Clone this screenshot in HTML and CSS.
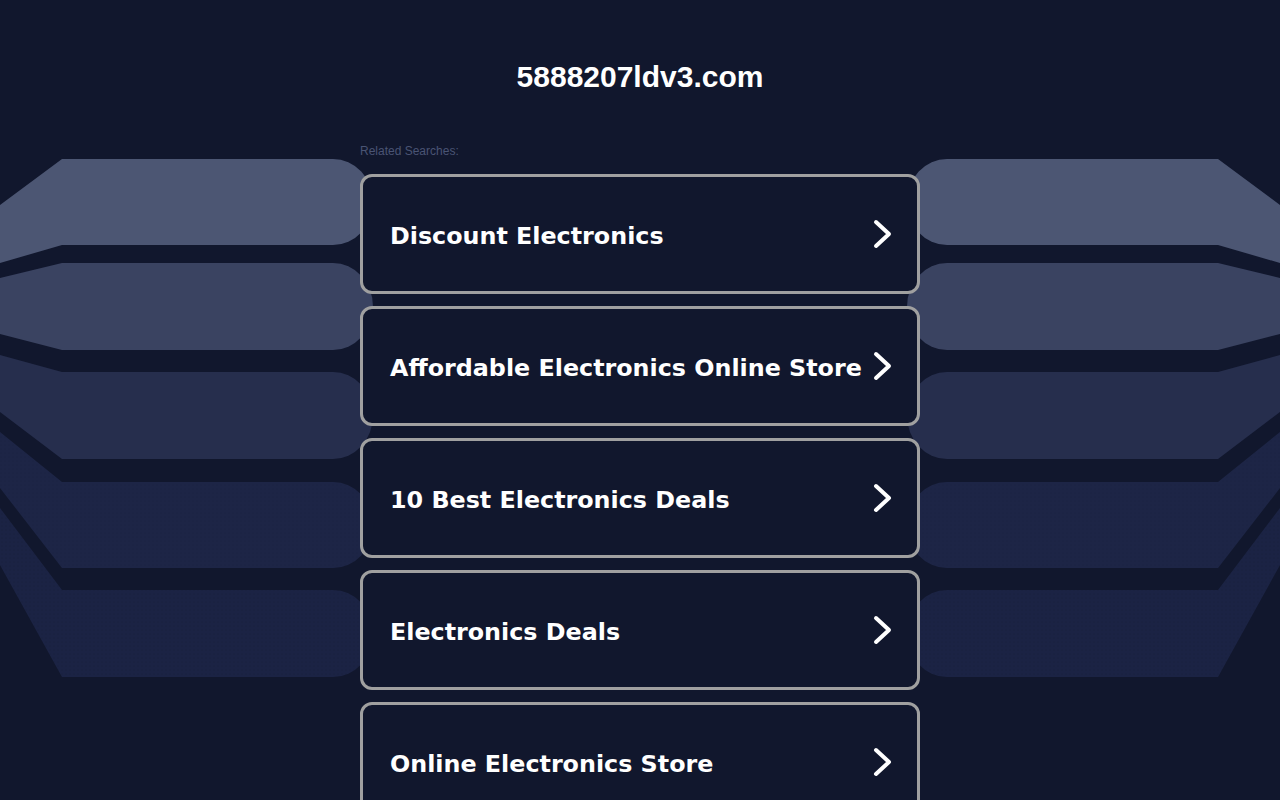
FILE: index.html
```html
<!DOCTYPE html>
<html lang="en">
<head>
<meta charset="utf-8">
<title>5888207ldv3.com</title>
<link rel="stylesheet" href="styles.css">
</head>
<body>
<svg class="backdrop" width="1280" height="800" viewBox="0 0 1280 800" aria-hidden="true">
  <defs>
    <pattern id="dots4" width="4" height="4" patternUnits="userSpaceOnUse">
      <rect width="4" height="4" fill="#1d2546"/>
      <circle cx="1" cy="1" r="0.6" fill="#18203e"/>
    </pattern>
    <pattern id="dots5" width="4" height="4" patternUnits="userSpaceOnUse">
      <rect width="4" height="4" fill="#1b2344"/>
      <circle cx="2" cy="2" r="0.6" fill="#151c39"/>
    </pattern>
    <g id="bands">
      <path d="M0,205 L62,159 L333,159 A40,43 0 0 1 333,245 L62,245 L0,263 Z" fill="#4c5673"/>
      <path d="M0,278 L62,263 L333,263 A40,43.5 0 0 1 333,350 L62,350 L0,334 Z" fill="#3a4361"/>
      <path d="M0,355 L62,372 L333,372 A40,43.5 0 0 1 333,459 L62,459 L0,412 Z" fill="#262e4d"/>
      <path d="M0,432 L62,482 L333,482 A40,43 0 0 1 333,568 L62,568 L0,488 Z" fill="url(#dots4)"/>
      <path d="M0,508 L62,590 L333,590 A40,43.5 0 0 1 333,677 L62,677 L0,565 Z" fill="url(#dots5)"/>
    </g>
  </defs>
  <use href="#bands"/>
  <use href="#bands" transform="translate(1280,0) scale(-1,1)"/>
</svg>

<div class="page">
  <h1 class="domain">5888207ldv3.com</h1>
  <main class="results">
    <p class="label">Related Searches:</p>
    <ul class="list">
      <li><a class="card" href="#"><span class="card-text">Discount Electronics</span><svg class="chev" width="20" height="30" viewBox="0 0 20 30"><path d="M3,3 L16,15 L3,27" fill="none" stroke="#fff" stroke-width="4" stroke-linecap="round" stroke-linejoin="round"/></svg></a></li>
      <li><a class="card" href="#"><span class="card-text">Affordable Electronics Online Store</span><svg class="chev" width="20" height="30" viewBox="0 0 20 30"><path d="M3,3 L16,15 L3,27" fill="none" stroke="#fff" stroke-width="4" stroke-linecap="round" stroke-linejoin="round"/></svg></a></li>
      <li><a class="card" href="#"><span class="card-text">10 Best Electronics Deals</span><svg class="chev" width="20" height="30" viewBox="0 0 20 30"><path d="M3,3 L16,15 L3,27" fill="none" stroke="#fff" stroke-width="4" stroke-linecap="round" stroke-linejoin="round"/></svg></a></li>
      <li><a class="card" href="#"><span class="card-text">Electronics Deals</span><svg class="chev" width="20" height="30" viewBox="0 0 20 30"><path d="M3,3 L16,15 L3,27" fill="none" stroke="#fff" stroke-width="4" stroke-linecap="round" stroke-linejoin="round"/></svg></a></li>
      <li><a class="card" href="#"><span class="card-text">Online Electronics Store</span><svg class="chev" width="20" height="30" viewBox="0 0 20 30"><path d="M3,3 L16,15 L3,27" fill="none" stroke="#fff" stroke-width="4" stroke-linecap="round" stroke-linejoin="round"/></svg></a></li>
    </ul>
  </main>
</div>
</body>
</html>
```

FILE: styles.css
```css
html, body {
  margin: 0;
  padding: 0;
}

body {
  background: #11172d;
  color: #ffffff;
  font-family: "Liberation Sans", Arial, sans-serif;
  position: relative;
  min-height: 800px;
  overflow-x: hidden;
}

.backdrop {
  position: absolute;
  top: 0;
  left: 0;
  z-index: 0;
  display: block;
}

.page {
  position: relative;
  z-index: 1;
  display: flex;
  flex-direction: column;
  align-items: center;
}

.domain {
  margin: 0;
  padding-top: 60px;
  font-family: "Liberation Sans", Arial, sans-serif;
  font-weight: bold;
  font-size: 30px;
  line-height: 34px;
  color: #ffffff;
  text-align: center;
}

.results {
  width: 560px;
  margin-top: 50px;
}

.label {
  margin: 0 0 16px 0;
  font-size: 12px;
  line-height: 14px;
  color: #4a5474;
}

.list {
  list-style: none;
  margin: 0;
  padding: 0;
  display: flex;
  flex-direction: column;
  gap: 12px;
}

.card {
  box-sizing: border-box;
  height: 120px;
  display: flex;
  align-items: center;
  justify-content: space-between;
  padding: 0 24px 0 27px;
  background: #11172d;
  border: 3px solid #a0a0a0;
  border-radius: 12px;
  text-decoration: none;
  color: #ffffff;
}

.card-text {
  padding-top: 4px;
  font-family: "DejaVu Sans", Verdana, sans-serif;
  font-weight: bold;
  font-size: 23.8px;
  line-height: 30px;
  white-space: nowrap;
}

.chev {
  display: block;
  flex: none;
}
```
